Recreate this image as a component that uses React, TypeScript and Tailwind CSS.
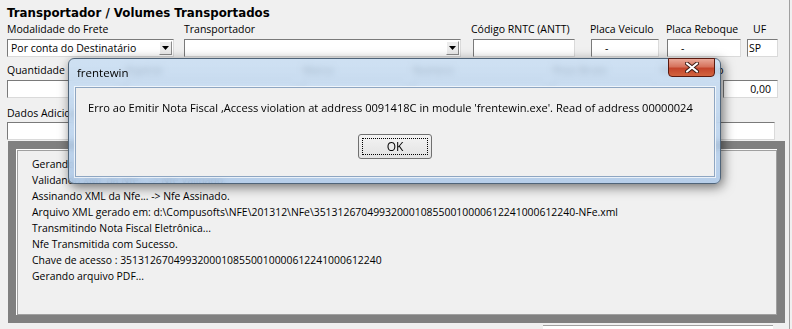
import React from 'react';

// Win7-style NF-e transport form with an error message box on top

const DropBtn = () => (
  <div className="w-[13px] h-[14px] mr-[1px] flex items-center justify-center bg-[#ececec] border border-t-white border-l-white border-b-[#8c8c8c] border-r-[#8c8c8c]">
    <svg width="7" height="4" viewBox="0 0 7 4">
      <path d="M0 0h7L3.5 4z" fill="#000" />
    </svg>
  </div>
);

const boxCls =
  'h-[18px] flex items-center bg-white border border-t-[#7a7a7a] border-l-[#7a7a7a] border-r-[#dadada] border-b-[#dadada]';

const logLines = [
  'Gerando XML da Nfe... -> Nfe Gerado.',
  'Validando XML da Nfe... -> Nfe Validado.',
  'Assinando XML da Nfe... -> Nfe Assinado.',
  'Arquivo XML gerado em: d:\\Compusofts\\NFE\\201312\\NFe\\35131267049932000108550010000612241000612240-NFe.xml',
  'Transmitindo Nota Fiscal Eletrônica...',
  'Nfe Transmitida com Sucesso.',
  'Chave de acesso : 35131267049932000108550010000612241000612240',
  'Gerando arquivo PDF...',
];

const ErrorDialog = () => (
  <div className="absolute left-[68px] top-[58px] w-[653px] h-[126px] rounded-[6px] border border-[#4f6479] bg-[linear-gradient(180deg,rgba(198,220,242,0.82),rgba(172,200,232,0.85))] backdrop-blur-[3px] shadow-[2px_3px_12px_rgba(0,0,0,0.55)] flex flex-col pl-[6px] pr-[5px] pb-[6px]">
    {/* title bar */}
    <div className="h-[28px] flex items-center pl-[2px] text-[11.5px] text-black">frentewin</div>
    <button className="absolute right-[5px] -top-px w-[47px] h-[19px] rounded-b-[4px] border border-[#5a1a10] bg-[linear-gradient(180deg,#e9a797_0%,#d6735d_45%,#c4452c_55%,#d2643f_100%)] flex items-center justify-center">
      <svg width="14" height="11" viewBox="0 0 14 11">
        <path d="M2 1.5L12 9.5M12 1.5L2 9.5" stroke="#3b1a14" strokeWidth="4" strokeLinecap="round" />
        <path d="M2 1.5L12 9.5M12 1.5L2 9.5" stroke="#fff" strokeWidth="2.2" strokeLinecap="round" />
      </svg>
    </button>
    {/* client area */}
    <div className="flex-1 bg-[#f0f0f0] border border-[#8ea6c2] outline outline-1 outline-[rgba(255,255,255,0.7)] flex flex-col">
      <p className="pl-[12px] pt-[12px] text-[11.1px] leading-[16px] text-black whitespace-nowrap">
        Erro ao Emitir Nota Fiscal ,Access violation at address 0091418C in module 'frentewin.exe'. Read of address 00000024
      </p>
      <div className="flex justify-center pt-[18px]">
        <div className="w-[74px] h-[25px] shrink-0 rounded-[3px] border border-[#707070] bg-[linear-gradient(180deg,#f3f3f3,#e2e2e2)] p-[3px]">
          <div className="h-full border border-dotted border-black flex items-center justify-center text-[12px] text-black">OK</div>
        </div>
      </div>
    </div>
  </div>
);

export default function App() {
  return (
    <div
      className="relative w-[792px] h-[329px] overflow-hidden bg-[#f0f0f0] text-black"
      style={{ fontFamily: '"Open Sans", "Noto Sans", sans-serif' }}
    >
      <div className="w-[790px] h-full border-r border-[#a0a0a0] flex flex-col">
        <h1
          className="pl-[7px] pt-[4px] h-[24px] text-[11.8px] font-bold leading-[18px]"
          style={{ fontFamily: '"DejaVu Sans", sans-serif' }}
        >
          Transportador / Volumes Transportados
        </h1>

        {/* row 1 */}
        <div className="flex pl-[7px] text-[10.5px] leading-[14px]">
          <div className="w-[177px] flex flex-col gap-[2px]">
            <span className="h-[14px] mb-px">Modalidade do Frete</span>
            <div className={`${boxCls} w-[167px] justify-between`}>
              <span className="pl-[3px]">Por conta do Destinatário</span>
              <DropBtn />
            </div>
          </div>
          <div className="w-[287px] flex flex-col gap-[2px]">
            <span className="h-[14px] mb-px">Transportador</span>
            <div className={`${boxCls} w-[277px] justify-end`}>
              <DropBtn />
            </div>
          </div>
          <div className="w-[119px] flex flex-col gap-[2px]">
            <span className="h-[14px] mb-px">Código RNTC (ANTT)</span>
            <div className={`${boxCls} w-[102px] ml-[2px]`} />
          </div>
          <div className="w-[76px] flex flex-col gap-[2px]">
            <span className="h-[14px] mb-px">Placa Veiculo</span>
            <div className={`${boxCls} w-[68px] ml-px pl-[13px]`}>-</div>
          </div>
          <div className="w-[81px] flex flex-col gap-[2px]">
            <span className="h-[14px] mb-px">Placa Reboque</span>
            <div className={`${boxCls} w-[74px] ml-px pl-[13px]`}>-</div>
          </div>
          <div className="w-[31px] flex flex-col gap-[2px]">
            <span className="h-[14px] mb-px pl-[6px]">UF</span>
            <div className={`${boxCls} w-[31px] pl-px`}>SP</div>
          </div>
        </div>

        {/* row 2 */}
        <div className="flex pl-[7px] pt-[6px] text-[10.5px] leading-[14px]">
          <div className="w-[119px] flex flex-col gap-[2px]">
            <span className="h-[14px] mb-px">Quantidade</span>
            <div className={`${boxCls} w-[110px]`} />
          </div>
          <div className="w-[177px] flex flex-col gap-[2px]">
            <span className="h-[14px] mb-px">Espécie</span>
            <div className={`${boxCls} w-[168px]`} />
          </div>
          <div className="w-[110px] flex flex-col gap-[2px]">
            <span className="h-[14px] mb-px">Marca</span>
            <div className={`${boxCls} w-[102px]`} />
          </div>
          <div className="w-[140px] flex flex-col gap-[2px]">
            <span className="h-[14px] mb-px">Numero</span>
            <div className={`${boxCls} w-[132px]`} />
          </div>
          <div className="w-[108px] flex flex-col gap-[2px]">
            <span className="h-[14px] mb-px">Peso Bruto</span>
            <div className={`${boxCls} w-[101px]`} />
          </div>
          <div className="w-[117px] flex flex-col gap-[2px]">
            <span className="h-[14px] mb-px">Peso Liquido</span>
            <div className={`${boxCls} w-[55px] ml-auto justify-end pr-[6px]`}>0,00</div>
          </div>
        </div>

        {/* dados adicionais */}
        <div className="pl-[7px] pt-[8px] text-[10.5px] leading-[14px]">
          <span className="block h-[14px] mb-[2px]">Dados Adicionais</span>
          <div className={`${boxCls} w-[768px]`} />
        </div>

        {/* log panel */}
        <div className="ml-[8px] mt-[1px] w-[777px] h-[182px] shrink-0 border-[8px] border-[#808080] bg-white pl-px pt-px">
          <div className="w-full h-full border border-[#a0a0a0] bg-[#f0f0f0] pl-[14px] pt-[5px] text-[10.4px] leading-[16px]">
            {logLines.map((l) => (
              <div key={l} className="whitespace-nowrap">{l}</div>
            ))}
          </div>
        </div>

        <div className="ml-[543px] mt-[2px] w-[230px] h-[10px] shrink-0 border-t border-[#a0a0a0] bg-white" />
      </div>

      <ErrorDialog />
    </div>
  );
}
